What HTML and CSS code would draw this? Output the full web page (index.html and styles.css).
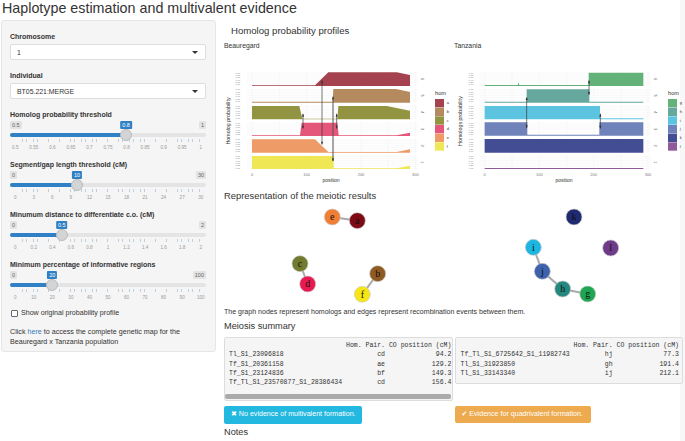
FILE: index.html
```html
<!DOCTYPE html>
<html lang="en">

<head>
  <title>Haplotype estimation and multivalent evidence</title>
  <meta name="viewport" content="width=device-width, initial-scale=1">
  <link rel="stylesheet" href="styles.css">
</head>

<body>
  <h1 class="title">Haplotype estimation and multivalent evidence</h1>

  <div class="layout">

    <!-- Sidebar -->
    <div class="sidebar">
      <label class="field-label">Chromosome</label>
      <div class="select">1<span class="caret"></span></div>

      <label class="field-label">Individual</label>
      <div class="select">BT05.221:MERGE<span class="caret"></span></div>

      <div class="slider-group first">
        <label class="field-label">Homolog probability threshold</label>
        <div class="slider" style="--pos:59.2%">
          <div class="ends"><span>0.5</span><span>1</span></div>
          <span class="bubble">0.8</span>
          <div class="track"><div class="fill"></div><div class="thumb"></div></div>
          <div class="ticks"></div>
          <div class="tick-labels"><span>0.5</span><span>0.55</span><span>0.6</span><span>0.65</span><span>0.7</span><span>0.75</span><span>0.8</span><span>0.85</span><span>0.9</span><span>0.95</span><span>1</span></div>
        </div>
      </div>

      <div class="slider-group">
        <label class="field-label">Segment/gap length threshold (cM)</label>
        <div class="slider" style="--pos:34.2%">
          <div class="ends"><span>0</span><span>30</span></div>
          <span class="bubble">10</span>
          <div class="track"><div class="fill"></div><div class="thumb"></div></div>
          <div class="ticks"></div>
          <div class="tick-labels"><span>0</span><span>3</span><span>6</span><span>9</span><span>12</span><span>15</span><span>18</span><span>21</span><span>24</span><span>27</span><span>30</span></div>
        </div>
      </div>

      <div class="slider-group">
        <label class="field-label">Minumum distance to differentiate c.o. (cM)</label>
        <div class="slider" style="--pos:26.4%">
          <div class="ends"><span>0</span><span>2</span></div>
          <span class="bubble">0.5</span>
          <div class="track"><div class="fill"></div><div class="thumb"></div></div>
          <div class="ticks"></div>
          <div class="tick-labels"><span>0</span><span>0.2</span><span>0.4</span><span>0.6</span><span>0.8</span><span>1</span><span>1.2</span><span>1.4</span><span>1.6</span><span>1.8</span><span>2</span></div>
        </div>
      </div>

      <div class="slider-group">
        <label class="field-label">Minimum percentage of informative regions</label>
        <div class="slider" style="--pos:21.6%">
          <div class="ends"><span>0</span><span>100</span></div>
          <span class="bubble">20</span>
          <div class="track"><div class="fill"></div><div class="thumb"></div></div>
          <div class="ticks"></div>
          <div class="tick-labels"><span>0</span><span>10</span><span>20</span><span>30</span><span>40</span><span>50</span><span>60</span><span>70</span><span>80</span><span>90</span><span>100</span></div>
        </div>
      </div>

      <div class="check-row"><span class="checkbox"></span>Show original probability profile</div>

      <p class="map-note">Click <a class="link">here</a> to access the complete genetic map for the Beauregard x Tanzania population</p>
    </div>

    <!-- Main panel -->
    <div class="main">
      <h4 class="plots-heading">Homolog probability profiles</h4>

      <div class="plots">
        <div class="plot">
          <div class="plot-name">Beauregard</div>
          <svg class="plot-svg" viewBox="0 120 705 390">
            <defs>
              <g id="grid" stroke="#eeeeee" stroke-width="1">
                <path d="M80 4H594M80 10H594M80 16H594M80 22H594M80 28H594M80 34H594M80 40H594" />
                <path d="M96 0V44M178 0V44M260 0V44M342 0V44M423 0V44M505 0V44M586 0V44" />
              </g>
              <g id="yticks" font-size="7" fill="#777777" text-anchor="end">
                <text x="60" y="6">1.00</text><text x="60" y="13">0.80</text><text x="60" y="20">0.60</text><text x="60" y="27">0.40</text><text x="60" y="34">0.20</text><text x="60" y="41">0.00</text>
              </g>
            </defs>
            <use href="#grid" y="155" /><use href="#grid" y="205" /><use href="#grid" y="255" /><use href="#grid" y="305" /><use href="#grid" y="355" /><use href="#grid" y="405" />
            <use href="#yticks" y="155" /><use href="#yticks" y="205" /><use href="#yticks" y="255" /><use href="#yticks" y="305" /><use href="#yticks" y="355" /><use href="#yticks" y="405" />
            <path fill="#a4434f" d="M96 198V196H285L325 157H530L570 165V198Z" />
            <path fill="#b58a5e" d="M96 248V245H338L340 207H528L570 216V248Z" />
            <path fill="#929442" d="M96 298V258H238L247 296H352L355 258H500L570 272V298Z" />
            <path fill="#e4567a" d="M96 348V346H240L245 308H352L356 346H530L570 338V348Z" />
            <path fill="#ef9b68" d="M96 398V358H285L325 396H530L570 388V398Z" />
            <path fill="#f0e755" d="M96 447V408H340L341 445H530L570 437V447Z" />
            <g stroke="#333333" stroke-width="2" fill="#333333">
              <path d="M306 182V373" /><path d="M339 232V423" stroke="#555555" stroke-width="3" /><path d="M249 282V325" /><path d="M350 282V325" />
              <path stroke="none" d="M306 180l-3 10h6ZM306 375l-3-10h6ZM339 228l-3 10h6ZM339 425l-3-10h6ZM249 280l-3 10h6ZM249 327l-3-10h6ZM350 280l-3 10h6ZM350 327l-3-10h6Z" />
            </g>
            <g font-size="12" fill="#555555" text-anchor="middle">
              <text transform="translate(603 177) rotate(90)">6</text><text transform="translate(603 227) rotate(90)">5</text><text transform="translate(603 277) rotate(90)">4</text><text transform="translate(603 327) rotate(90)">3</text><text transform="translate(603 377) rotate(90)">2</text><text transform="translate(603 427) rotate(90)">1</text>
            </g>
            <g font-size="12" fill="#777777" text-anchor="middle">
              <text x="96" y="468">0</text><text x="260" y="468">100</text><text x="423" y="468">200</text><text x="586" y="468">300</text>
            </g>
            <text x="333" y="485" font-size="15" fill="#333333" text-anchor="middle">position</text>
            <text transform="translate(29 303) rotate(-90)" font-size="16" fill="#333333" text-anchor="middle">Homolog probability</text>
            <text x="645" y="226" font-size="17" fill="#333333">hom</text>
            <rect x="645" y="237" width="27" height="25" fill="#a4434f" /><rect x="645" y="263" width="27" height="25" fill="#b58a5e" /><rect x="645" y="289" width="27" height="25" fill="#929442" /><rect x="645" y="315" width="27" height="25" fill="#e4567a" /><rect x="645" y="341" width="27" height="25" fill="#ef9b68" /><rect x="645" y="367" width="27" height="25" fill="#f0e755" />
            <g font-size="12" fill="#333333">
              <text x="680" y="253">a</text><text x="680" y="279">b</text><text x="680" y="305">c</text><text x="680" y="331">d</text><text x="680" y="357">e</text><text x="680" y="383">f</text>
            </g>
          </svg>
        </div>

        <div class="plot">
          <div class="plot-name">Tanzania</div>
          <svg class="plot-svg" viewBox="0 120 705 390">
            <use href="#grid" x="8" y="155" /><use href="#grid" x="8" y="205" /><use href="#grid" x="8" y="255" /><use href="#grid" x="8" y="305" /><use href="#grid" x="8" y="355" /><use href="#grid" x="8" y="405" />
            <use href="#yticks" x="10" y="155" /><use href="#yticks" x="10" y="205" /><use href="#yticks" x="10" y="255" /><use href="#yticks" x="10" y="305" /><use href="#yticks" x="10" y="355" /><use href="#yticks" x="10" y="405" />
            <path fill="#63b27a" d="M104 198V195H203L206 187L208 195H416V158H580V198Z" />
            <path fill="#66a89e" d="M104 248V245H230V208H418V245H580V248Z" />
            <path fill="#5cc4e0" d="M104 298V258H450V295H580V298Z" />
            <path fill="#6f83ba" d="M104 347V307H232V344H448V307H580V347Z" />
            <path fill="#434d94" d="M104 398V357H580V398Z" />
            <path fill="#8f5b98" d="M104 447V444H580V447Z" />
            <g stroke="#333333" stroke-width="2" fill="#333333">
              <path d="M417 182V224" /><path d="M230 234V324" /><path d="M451 282V325" />
              <path stroke="none" d="M417 180l-3 10h6ZM417 226l-3-10h6ZM230 230l-3 10h6ZM230 326l-3-10h6ZM451 280l-3 10h6ZM451 327l-3-10h6Z" />
            </g>
            <g font-size="12" fill="#555555" text-anchor="middle">
              <text transform="translate(611 177) rotate(90)">6</text><text transform="translate(611 227) rotate(90)">5</text><text transform="translate(611 277) rotate(90)">4</text><text transform="translate(611 327) rotate(90)">3</text><text transform="translate(611 377) rotate(90)">2</text><text transform="translate(611 427) rotate(90)">1</text>
            </g>
            <g font-size="12" fill="#777777" text-anchor="middle">
              <text x="104" y="468">0</text><text x="268" y="468">100</text><text x="431" y="468">200</text><text x="594" y="468">300</text>
            </g>
            <text x="342" y="485" font-size="15" fill="#333333" text-anchor="middle">position</text>
            <text transform="translate(37 303) rotate(-90)" font-size="16" fill="#333333" text-anchor="middle">Homologs probability</text>
            <text x="654" y="226" font-size="17" fill="#333333">hom</text>
            <rect x="654" y="237" width="27" height="25" fill="#63b27a" /><rect x="654" y="263" width="27" height="25" fill="#66a89e" /><rect x="654" y="289" width="27" height="25" fill="#5cc4e0" /><rect x="654" y="315" width="27" height="25" fill="#6f83ba" /><rect x="654" y="341" width="27" height="25" fill="#434d94" /><rect x="654" y="367" width="27" height="25" fill="#8f5b98" />
            <g font-size="12" fill="#333333">
              <text x="689" y="253">g</text><text x="689" y="279">h</text><text x="689" y="305">i</text><text x="689" y="331">j</text><text x="689" y="357">k</text><text x="689" y="383">l</text>
            </g>
          </svg>
        </div>
      </div>

      <h4 class="section-heading">Representation of the meiotic results</h4>

      <!-- graph nodes sit on a free canvas -->
      <svg class="graph" viewBox="0 60 1395 300">
        <path fill="none" stroke="#aaaaaa" stroke-width="6" d="M337 96L412 107M240 236L263 297M473 266L427 328M940 187L967 259L1028 312L1103 327" />
        <g stroke="#cccccc" stroke-width="2">
          <circle cx="337" cy="96" r="24" fill="#f07f35" />
          <circle cx="412" cy="107" r="24" fill="#7d0a14" />
          <circle cx="240" cy="236" r="24" fill="#727a2e" />
          <circle cx="263" cy="297" r="24" fill="#e8194f" />
          <circle cx="473" cy="266" r="24" fill="#8f5b22" />
          <circle cx="427" cy="328" r="24" fill="#f6e616" />
          <circle cx="1062" cy="96" r="24" fill="#1f2a70" />
          <circle cx="940" cy="187" r="24" fill="#1db6e0" />
          <circle cx="1172" cy="189" r="24" fill="#6d3b87" />
          <circle cx="967" cy="259" r="24" fill="#3f62ad" />
          <circle cx="1028" cy="312" r="24" fill="#25887f" />
          <circle cx="1103" cy="327" r="24" fill="#1fa652" />
        </g>
        <g class="node-labels">
          <text x="337" y="106">e</text><text x="412" y="117">a</text><text x="240" y="246">c</text><text x="263" y="307">d</text><text x="473" y="276">b</text><text x="427" y="338">f</text>
          <text x="1062" y="106">k</text><text x="940" y="197">i</text><text x="1172" y="199">l</text><text x="967" y="269">j</text><text x="1028" y="322">h</text><text x="1103" y="337">g</text>
        </g>
      </svg>

      <p class="graph-note">The graph nodes represent homologs and edges represent recombination events between them.</p>

      <h4 class="summary-heading">Meiosis summary</h4>

      <div class="summary">
        <div class="summary-col">
          <div class="pre-box">
<pre class="pre-text">                              Hom. Pair. CO position (cM)
Tl_S1_23096818                        cd             94.2
Tf_S1_20361158                        ae            129.2
Tf_S1_23124836                        bf            149.3
Tf_Tl_S1_23570877_S1_28386434         cd            156.4</pre>
            <div class="scrollbar"><div class="scrollbar-thumb"></div></div>
          </div>
          <div class="alert alert-info"><span class="alert-icon">&#10006;</span> No evidence of multivalent formation.</div>
        </div>
        <div class="summary-col">
          <div class="pre-box pre-right">
<pre class="pre-text">                             Hom. Pair. CO position (cM)
Tf_Tl_S1_6725642_S1_11982743         hj             77.3
Tl_S1_31923850                       gh            191.4
Tl_S1_33143340                       ij            212.1</pre>
          </div>
          <div class="alert alert-warning"><span class="alert-icon">&#10004;</span> Evidence for quadrivalent formation.</div>
        </div>
      </div>

      <h4 class="notes-heading">Notes</h4>
    </div>

  </div>
</body>

</html>
```

FILE: styles.css
```css
* {
  box-sizing: border-box;
  margin: 0;
  padding: 0;
}

html,
body {
  height: 441px;
  overflow: hidden;
}

body {
  font-family: "Liberation Sans", Arial, sans-serif;
  color: #333;
  background: linear-gradient(to left, #f7f7f7 5px, #fff 5px);
}

.title {
  height: 20px;
  padding-left: 2px;
  font-size: 14.3px;
  line-height: 16px;
  font-weight: 500;
}

.layout {
  display: flex;
  align-items: flex-start;
}

/* Sidebar */

.sidebar {
  width: 215px;
  height: 332px;
  margin-left: 1px;
  padding: 11px 9px 0 8px;
  background: #f5f5f5;
  border: 1px solid #e6e6e6;
  border-radius: 3px;
}

.field-label {
  display: block;
  height: 9px;
  margin-bottom: 3px;
  font-size: 7px;
  line-height: 9px;
  font-weight: bold;
}

.select {
  position: relative;
  height: 16px;
  margin-bottom: 11px;
  padding-left: 6px;
  background: #fff;
  border: 1px solid #ddd;
  border-radius: 2px;
  font-size: 6.9px;
  line-height: 15px;
}

.caret {
  position: absolute;
  right: 7px;
  top: 6px;
  border-top: 3px solid #333;
  border-left: 3px solid transparent;
  border-right: 3px solid transparent;
}

.slider-group {
  height: 50px;
}

.slider-group.first {
  margin-top: 1px;
}

.slider-group .field-label {
  margin-bottom: 2px;
}

.slider {
  position: relative;
}

.ends {
  display: flex;
  justify-content: space-between;
  height: 8px;
}

.ends span {
  padding: 0 2px;
  background: #e3e3e3;
  border-radius: 1px;
  color: #666;
  font-size: 5.5px;
  line-height: 8px;
}

.bubble {
  position: absolute;
  top: 0;
  left: var(--pos);
  transform: translateX(-50%);
  padding: 0 2px;
  background: #2f80c4;
  border-radius: 1px;
  color: #fff;
  font-size: 5.5px;
  line-height: 8px;
}

.track {
  position: relative;
  height: 4px;
  margin-top: 4px;
  background: #e4e4e4;
  border-radius: 2px;
}

.fill {
  width: var(--pos);
  height: 4px;
  background: #2f80c4;
  border-radius: 2px 0 0 2px;
}

.thumb {
  position: absolute;
  top: -4px;
  left: var(--pos);
  width: 12px;
  height: 12px;
  margin-left: -6px;
  background: #d2d4d6;
  border: 1px solid #bbb;
  border-radius: 50%;
}

.ticks {
  height: 5px;
  margin: 2px 5px 0;
  background: repeating-linear-gradient(to right, #bfcfdd 0, #bfcfdd 0.5px, transparent 0.5px, transparent 3.69px) top / 100% 3px no-repeat;
}

.tick-labels {
  display: grid;
  grid-template-columns: repeat(11, 1fr);
  margin: 0 -4px;
  color: #999;
  font-size: 4.6px;
  line-height: 7px;
  text-align: center;
}

.check-row {
  display: flex;
  align-items: center;
  gap: 3px;
  margin-top: -1px;
  font-size: 7.1px;
  line-height: 9px;
}

.checkbox {
  width: 7px;
  height: 7px;
  margin-left: 1px;
  background: #fff;
  border: 1px solid #667;
  border-radius: 1px;
}

.map-note {
  margin-top: 9px;
  font-size: 7.15px;
  line-height: 10px;
}

.link {
  color: #337ab7;
}

/* Main */

.main {
  width: 461px;
  margin-left: 8px;
}

.plots-heading {
  margin: 6px 0 0 7px;
  font-size: 9.6px;
  line-height: 10px;
  font-weight: 500;
}

.plots {
  display: flex;
}

.plot {
  width: 230px;
}

.plot-name {
  margin-top: 4.5px;
  font-size: 6.8px;
  line-height: 9px;
}

.plot-svg {
  display: block;
  width: 235px;
  height: 130px;
  margin: 10.5px 0 0 -4px;
  font-family: "Liberation Sans", Arial, sans-serif;
}

.section-heading {
  font-size: 9.4px;
  line-height: 11px;
  font-weight: 500;
}

.graph {
  display: block;
  width: 465px;
  height: 100px;
  margin: 4px 0 0 -4px;
}

.node-labels {
  font-family: "Liberation Serif", "Times New Roman", serif;
  font-size: 30px;
  fill: #111;
  text-anchor: middle;
}

.graph-note {
  margin-top: 1.5px;
  font-size: 7.05px;
  line-height: 9px;
}

.summary-heading {
  margin-top: 5.5px;
  font-size: 9.2px;
  line-height: 11px;
  font-weight: 500;
}

.summary {
  display: flex;
  gap: 2px;
  margin-top: 4.5px;
}

.summary-col {
  width: 228.5px;
}

.pre-box {
  height: 64.5px;
  padding: 3.5px 0 0 4px;
  background: #f5f5f5;
  border: 1px solid #ddd;
  border-radius: 2px;
  overflow: hidden;
}

.pre-right {
  height: 47.2px;
  margin-bottom: 22.3px;
  padding-left: 5px;
}

.pre-text {
  font-family: "Liberation Mono", "Courier New", monospace;
  font-size: 6.5px;
  line-height: 9.3px;
  color: #333;
}

.scrollbar {
  height: 5px;
  margin: 6.5px 1px 0 -4px;
  background: #eee;
}

.scrollbar-thumb {
  height: 5px;
  background: #aaa;
  border-radius: 2px;
}

.alert {
  height: 17.5px;
  margin-top: 5px;
  padding: 0 7px;
  border-radius: 2px;
  color: #fff;
  font-size: 7.1px;
  line-height: 17.5px;
  white-space: nowrap;
}

.alert-info {
  width: 138px;
  background: #22b8df;
}

.alert-warning {
  width: 136px;
  background: #edaa4f;
}

.alert-icon {
  font-family: "DejaVu Sans", sans-serif;
  font-size: 7px;
}

.notes-heading {
  margin-top: 3.5px;
  font-size: 9.2px;
  line-height: 11px;
  font-weight: 500;
}
```
